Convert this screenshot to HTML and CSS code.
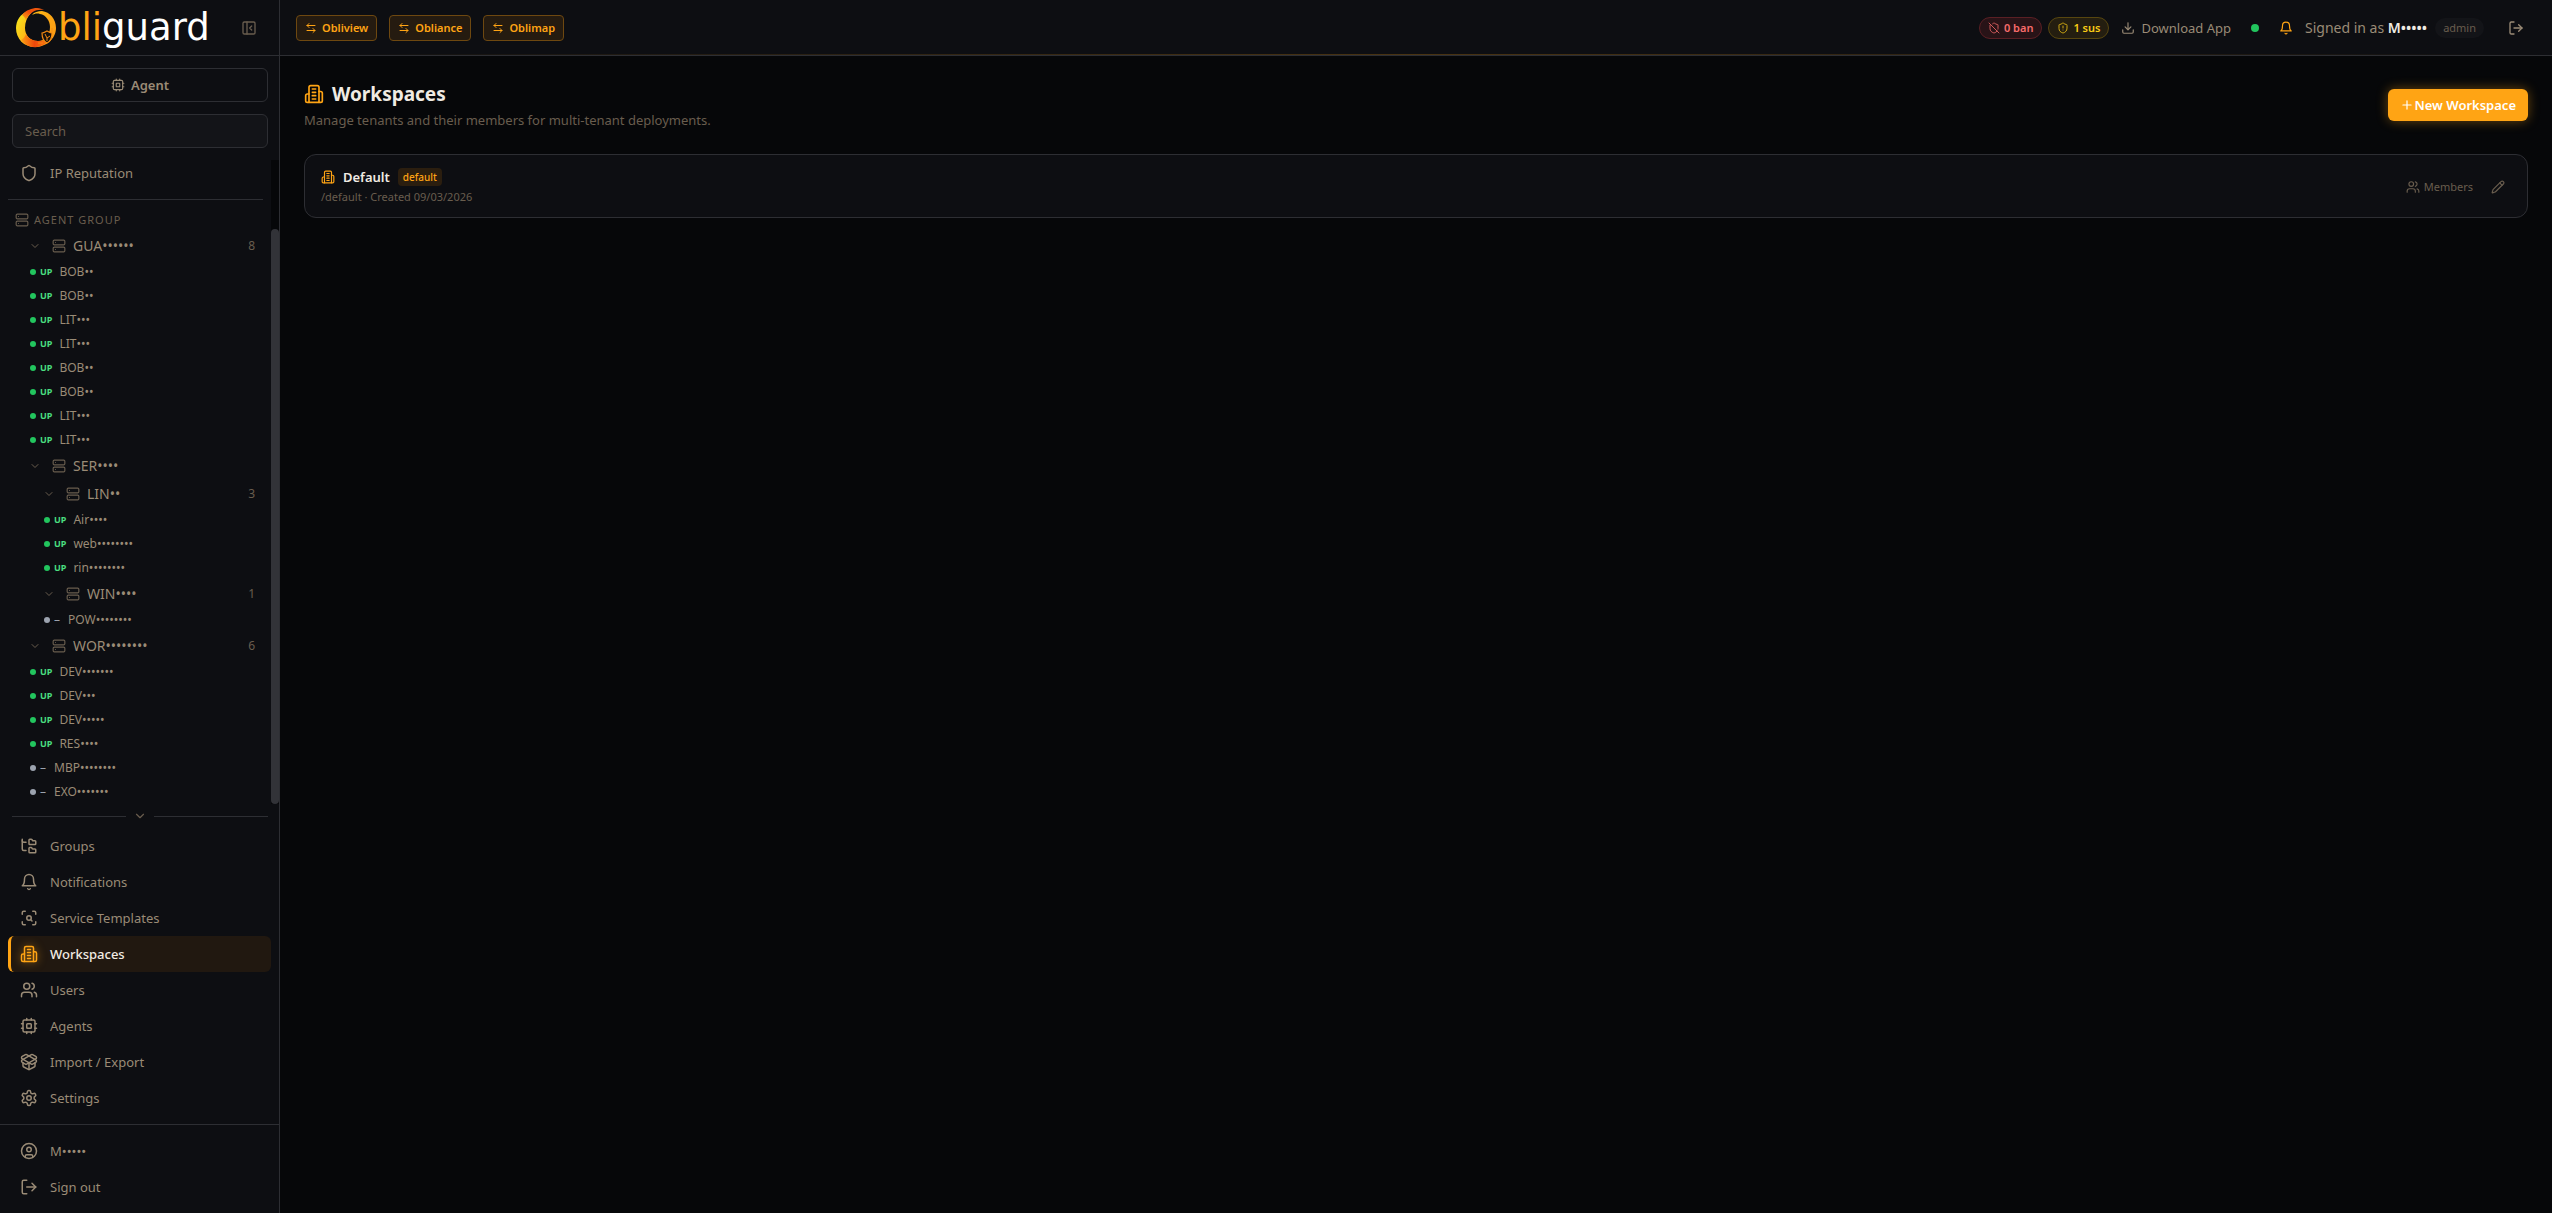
FILE: index.html
```html
<!DOCTYPE html>
<html lang="en">
<head>
    <meta charset="UTF-8">
    <meta name="viewport" content="width=device-width, initial-scale=1.0">
    <title>Obliguard - Workspaces</title>
    <link rel="stylesheet" href="styles.css">
</head>
<body>
    <!-- Icon set -->
    <svg class="sprite" aria-hidden="true">
        <symbol id="i-building" viewBox="0 0 24 24"><path d="M6 22V4a2 2 0 0 1 2-2h8a2 2 0 0 1 2 2v18Z"/><path d="M6 12H4a2 2 0 0 0-2 2v6a2 2 0 0 0 2 2h2"/><path d="M18 9h2a2 2 0 0 1 2 2v9a2 2 0 0 1-2 2h-2"/><path d="M10 6h4M10 10h4M10 14h4M10 18h4"/></symbol>
        <symbol id="i-tree" viewBox="0 0 24 24"><path d="M20 10a1 1 0 0 0 1-1V6a1 1 0 0 0-1-1h-2.5a1 1 0 0 1-.8-.4l-.9-1.2A1 1 0 0 0 15 3h-2a1 1 0 0 0-1 1v5a1 1 0 0 0 1 1Z"/><path d="M20 21a1 1 0 0 0 1-1v-3a1 1 0 0 0-1-1h-2.9a1 1 0 0 1-.88-.55l-.42-.85a1 1 0 0 0-.92-.6H13a1 1 0 0 0-1 1v5a1 1 0 0 0 1 1Z"/><path d="M3 5a2 2 0 0 0 2 2h3"/><path d="M3 3v13a2 2 0 0 0 2 2h3"/></symbol>
        <symbol id="i-bell" viewBox="0 0 24 24"><path d="M6 8a6 6 0 0 1 12 0c0 7 3 9 3 9H3s3-2 3-9"/><path d="M10.3 21a1.94 1.94 0 0 0 3.4 0"/></symbol>
        <symbol id="i-scan" viewBox="0 0 24 24"><path d="M3 7V5a2 2 0 0 1 2-2h2"/><path d="M17 3h2a2 2 0 0 1 2 2v2"/><path d="M21 17v2a2 2 0 0 1-2 2h-2"/><path d="M7 21H5a2 2 0 0 1-2-2v-2"/><circle cx="12" cy="12" r="3"/><path d="m16 16-1.9-1.9"/></symbol>
        <symbol id="i-users" viewBox="0 0 24 24"><path d="M16 21v-2a4 4 0 0 0-4-4H6a4 4 0 0 0-4 4v2"/><circle cx="9" cy="7" r="4"/><path d="M22 21v-2a4 4 0 0 0-3-3.87"/><path d="M16 3.13a4 4 0 0 1 0 7.75"/></symbol>
        <symbol id="i-cpu" viewBox="0 0 24 24"><rect x="4" y="4" width="16" height="16" rx="2"/><rect x="9" y="9" width="6" height="6" rx="1"/><path d="M15 2v2M15 20v2M2 15h2M2 9h2M20 15h2M20 9h2M9 2v2M9 20v2"/></symbol>
        <symbol id="i-package" viewBox="0 0 24 24"><path d="M12 22v-9"/><path d="M15.17 2.21a1.67 1.67 0 0 1 1.63 0L21 4.57a1.93 1.93 0 0 1 0 3.36L8.82 14.79a1.655 1.655 0 0 1-1.64 0L3 12.43a1.93 1.93 0 0 1 0-3.36z"/><path d="M20 13v3.87a2.06 2.06 0 0 1-1.11 1.83l-6 3.08a1.93 1.93 0 0 1-1.78 0l-6-3.08A2.06 2.06 0 0 1 4 16.87V13"/><path d="M21 12.43a1.93 1.93 0 0 0 0-3.36L8.83 2.2a1.64 1.64 0 0 0-1.63 0L3 4.57a1.93 1.93 0 0 0 0 3.36l12.18 6.86a1.636 1.636 0 0 0 1.63 0z"/></symbol>
        <symbol id="i-settings" viewBox="0 0 24 24"><path d="M12.22 2h-.44a2 2 0 0 0-2 2v.18a2 2 0 0 1-1 1.73l-.43.25a2 2 0 0 1-2 0l-.15-.08a2 2 0 0 0-2.73.73l-.22.38a2 2 0 0 0 .73 2.73l.15.1a2 2 0 0 1 1 1.72v.51a2 2 0 0 1-1 1.74l-.15.09a2 2 0 0 0-.73 2.73l.22.38a2 2 0 0 0 2.73.73l.15-.08a2 2 0 0 1 2 0l.43.25a2 2 0 0 1 1 1.73V20a2 2 0 0 0 2 2h.44a2 2 0 0 0 2-2v-.18a2 2 0 0 1 1-1.73l.43-.25a2 2 0 0 1 2 0l.15.08a2 2 0 0 0 2.73-.73l.22-.39a2 2 0 0 0-.73-2.73l-.15-.08a2 2 0 0 1-1-1.74v-.5a2 2 0 0 1 1-1.74l.15-.09a2 2 0 0 0 .73-2.73l-.22-.38a2 2 0 0 0-2.73-.73l-.15.08a2 2 0 0 1-2 0l-.43-.25a2 2 0 0 1-1-1.73V4a2 2 0 0 0-2-2z"/><circle cx="12" cy="12" r="3"/></symbol>
        <symbol id="i-user" viewBox="0 0 24 24"><circle cx="12" cy="12" r="10"/><circle cx="12" cy="10" r="3"/><path d="M7 20.662V19a2 2 0 0 1 2-2h6a2 2 0 0 1 2 2v1.662"/></symbol>
        <symbol id="i-logout" viewBox="0 0 24 24"><path d="M9 21H5a2 2 0 0 1-2-2V5a2 2 0 0 1 2-2h4"/><path d="m16 17 5-5-5-5"/><path d="M21 12H9"/></symbol>
        <symbol id="i-shield" viewBox="0 0 24 24"><path d="M20 13c0 5-3.5 7.5-7.66 8.95a1 1 0 0 1-.67-.01C7.5 20.5 4 18 4 13V6a1 1 0 0 1 1-1c2 0 4.5-1.2 6.24-2.72a1.17 1.17 0 0 1 1.52 0C14.51 3.81 17 5 19 5a1 1 0 0 1 1 1z"/></symbol>
        <symbol id="i-shield-alert" viewBox="0 0 24 24"><path d="M20 13c0 5-3.5 7.5-7.66 8.95a1 1 0 0 1-.67-.01C7.5 20.5 4 18 4 13V6a1 1 0 0 1 1-1c2 0 4.5-1.2 6.24-2.72a1.17 1.17 0 0 1 1.52 0C14.51 3.81 17 5 19 5a1 1 0 0 1 1 1z"/><path d="M12 8v4"/><path d="M12 16h.01"/></symbol>
        <symbol id="i-shield-off" viewBox="0 0 24 24"><path d="m2 2 20 20"/><path d="M5 5a1 1 0 0 0-1 1v7c0 5 3.5 7.5 7.67 8.94a1 1 0 0 0 .67.01c2.35-.82 4.48-1.97 5.9-3.71"/><path d="M9.309 3.652A12.252 12.252 0 0 0 11.24 2.28a1.17 1.17 0 0 1 1.52 0C14.51 3.81 17 5 19 5a1 1 0 0 1 1 1v7a9.784 9.784 0 0 1-.08 1.264"/></symbol>
        <symbol id="i-server" viewBox="0 0 24 24"><rect x="2" y="2" width="20" height="8" rx="2"/><rect x="2" y="14" width="20" height="8" rx="2"/><path d="M6 6h.01M6 18h.01"/></symbol>
        <symbol id="i-swap" viewBox="0 0 24 24"><path d="M8 3 4 7l4 4"/><path d="M4 7h16"/><path d="m16 21 4-4-4-4"/><path d="M20 17H4"/></symbol>
        <symbol id="i-download" viewBox="0 0 24 24"><path d="M21 15v4a2 2 0 0 1-2 2H5a2 2 0 0 1-2-2v-4"/><path d="m7 10 5 5 5-5"/><path d="M12 15V3"/></symbol>
        <symbol id="i-pencil" viewBox="0 0 24 24"><path d="M21.174 6.812a1 1 0 0 0-3.986-3.987L3.842 16.174a2 2 0 0 0-.5.83l-1.321 4.352a.5.5 0 0 0 .623.622l4.353-1.32a2 2 0 0 0 .83-.497z"/><path d="m15 5 4 4"/></symbol>
        <symbol id="i-panel" viewBox="0 0 24 24"><rect x="3" y="3" width="18" height="18" rx="2"/><path d="M9 3v18"/><path d="m16 15-3-3 3-3"/></symbol>
        <symbol id="i-chevron" viewBox="0 0 24 24"><path d="m6 9 6 6 6-6"/></symbol>
        <symbol id="i-plus" viewBox="0 0 24 24"><path d="M5 12h14M12 5v14"/></symbol>
    </svg>

    <div class="app">
        <aside class="sidebar">
            <div class="brand">
                <a href="#" class="logo" aria-label="Obliguard">
                    <svg class="logo-mark" viewBox="0 0 40 40">
                        <defs>
                            <linearGradient id="ring" x1="0" y1="0.3" x2="1" y2="0.7">
                                <stop offset="0" stop-color="#f7e11c"/>
                                <stop offset="0.35" stop-color="#fdb515"/>
                                <stop offset="1" stop-color="#fb9a14"/>
                            </linearGradient>
                            <linearGradient id="flameTop" x1="0" y1="1" x2="1" y2="0">
                                <stop offset="0" stop-color="#fbb016"/>
                                <stop offset="0.5" stop-color="#f2500c"/>
                                <stop offset="1" stop-color="#e8590c"/>
                            </linearGradient>
                            <linearGradient id="flameBottom" x1="0" y1="0" x2="1" y2="0">
                                <stop offset="0" stop-color="#fba016"/>
                                <stop offset="0.5" stop-color="#f0480a"/>
                                <stop offset="1" stop-color="#fb7a12"/>
                            </linearGradient>
                        </defs>
                        <path fill="url(#ring)" d="M12 3C4 6 0 13 0 20c0 11 8 19 19 19s21-8 21-19C40 11 34 4 26 3c-4 0-8 1-10 4 2-1 5-2 8-1 6 1 10 7 10 13 0 8-5 14-12 14-8 0-13-6-13-13 0-6 2-11 6-15Z"/>
                        <path fill="url(#flameTop)" d="M6 7C10 2 16 0 21 0c3 0 5 1 7 2-8-1-14 2-18 10-1-2-2-4-4-5Z"/>
                        <path fill="url(#flameBottom)" d="M5 32c4 5 10 8 16 7 5-1 9-3 11-6-4-1-6 0-10 0-6 0-10-3-12-7-1 3-3 5-5 6Z"/>
                        <path fill="#14100c" stroke="#f58a12" stroke-width="1.200" d="M31 23c2 1 3 2 5 2 0 5-1 8-5 10-4-2-5-5-5-10 2 0 3-1 5-2Z"/>
                        <path fill="none" stroke="#f58a12" d="M29 26l2 4 3-2M31 30v3M22 35h5M36 20v4"/>
                    </svg>
                    <span class="logo-text"><span class="logo-accent">bli</span>guard</span>
                </a>
                <button class="icon-btn" aria-label="Collapse sidebar"><svg class="icon s16"><use href="#i-panel"/></svg></button>
            </div>

            <div class="tools">
                <button class="agent-btn"><svg class="icon s14"><use href="#i-cpu"/></svg>Agent</button>
                <input class="search" type="text" placeholder="Search" aria-label="Search">
            </div>

            <div class="scroll">
                <div class="scroll-body">
                    <a href="#" class="nav-item nav-top"><svg class="icon s18"><use href="#i-shield"/></svg>IP Reputation</a>
                    <div class="tree">
                        <div class="tree-title"><svg class="icon s14"><use href="#i-server"/></svg>Agent group</div>

                        <button class="group"><svg class="icon s12"><use href="#i-chevron"/></svg><svg class="icon s14"><use href="#i-server"/></svg>GUA••••••<span class="count">8</span></button>
                        <a href="#" class="agent"><span class="dot up"></span><span class="state">UP</span>BOB••</a>
                        <a href="#" class="agent"><span class="dot up"></span><span class="state">UP</span>BOB••</a>
                        <a href="#" class="agent"><span class="dot up"></span><span class="state">UP</span>LIT•••</a>
                        <a href="#" class="agent"><span class="dot up"></span><span class="state">UP</span>LIT•••</a>
                        <a href="#" class="agent"><span class="dot up"></span><span class="state">UP</span>BOB••</a>
                        <a href="#" class="agent"><span class="dot up"></span><span class="state">UP</span>BOB••</a>
                        <a href="#" class="agent"><span class="dot up"></span><span class="state">UP</span>LIT•••</a>
                        <a href="#" class="agent"><span class="dot up"></span><span class="state">UP</span>LIT•••</a>

                        <button class="group"><svg class="icon s12"><use href="#i-chevron"/></svg><svg class="icon s14"><use href="#i-server"/></svg>SER••••</button>
                        <div class="nested">
                            <button class="group"><svg class="icon s12"><use href="#i-chevron"/></svg><svg class="icon s14"><use href="#i-server"/></svg>LIN••<span class="count">3</span></button>
                            <a href="#" class="agent"><span class="dot up"></span><span class="state">UP</span>Air••••</a>
                            <a href="#" class="agent"><span class="dot up"></span><span class="state">UP</span>web••••••••</a>
                            <a href="#" class="agent"><span class="dot up"></span><span class="state">UP</span>rin••••••••</a>
                            <button class="group"><svg class="icon s12"><use href="#i-chevron"/></svg><svg class="icon s14"><use href="#i-server"/></svg>WIN••••<span class="count">1</span></button>
                            <a href="#" class="agent"><span class="dot"></span><span class="state none">–</span>POW••••••••</a>
                        </div>

                        <button class="group"><svg class="icon s12"><use href="#i-chevron"/></svg><svg class="icon s14"><use href="#i-server"/></svg>WOR••••••••<span class="count">6</span></button>
                        <a href="#" class="agent"><span class="dot up"></span><span class="state">UP</span>DEV•••••••</a>
                        <a href="#" class="agent"><span class="dot up"></span><span class="state">UP</span>DEV•••</a>
                        <a href="#" class="agent"><span class="dot up"></span><span class="state">UP</span>DEV•••••</a>
                        <a href="#" class="agent"><span class="dot up"></span><span class="state">UP</span>RES••••</a>
                        <a href="#" class="agent"><span class="dot"></span><span class="state none">–</span>MBP••••••••</a>
                        <a href="#" class="agent"><span class="dot"></span><span class="state none">–</span>EXO•••••••</a>
                    </div>
                </div>
                <div class="scroll-track"><div class="scroll-thumb"></div></div>
            </div>

            <button class="fold" aria-label="Fold menu"><svg class="icon s14"><use href="#i-chevron"/></svg></button>

            <nav class="menu">
                <a href="#" class="nav-item"><svg class="icon s18"><use href="#i-tree"/></svg>Groups</a>
                <a href="#" class="nav-item"><svg class="icon s18"><use href="#i-bell"/></svg>Notifications</a>
                <a href="#" class="nav-item"><svg class="icon s18"><use href="#i-scan"/></svg>Service Templates</a>
                <a href="#" class="nav-item active"><svg class="icon s18"><use href="#i-building"/></svg>Workspaces</a>
                <a href="#" class="nav-item"><svg class="icon s18"><use href="#i-users"/></svg>Users</a>
                <a href="#" class="nav-item"><svg class="icon s18"><use href="#i-cpu"/></svg>Agents</a>
                <a href="#" class="nav-item"><svg class="icon s18"><use href="#i-package"/></svg>Import / Export</a>
                <a href="#" class="nav-item"><svg class="icon s18"><use href="#i-settings"/></svg>Settings</a>
            </nav>

            <div class="account">
                <a href="#" class="nav-item"><svg class="icon s18"><use href="#i-user"/></svg>M•••••</a>
                <a href="#" class="nav-item"><svg class="icon s18"><use href="#i-logout"/></svg>Sign out</a>
            </div>
        </aside>

        <div class="page">
            <header class="topbar">
                <div class="switches">
                    <a href="#" class="switch"><svg class="icon s12"><use href="#i-swap"/></svg>Obliview</a>
                    <a href="#" class="switch"><svg class="icon s12"><use href="#i-swap"/></svg>Obliance</a>
                    <a href="#" class="switch"><svg class="icon s12"><use href="#i-swap"/></svg>Oblimap</a>
                </div>
                <div class="status">
                    <div class="pills">
                        <a href="#" class="pill ban"><svg class="icon s12"><use href="#i-shield-off"/></svg>0 ban</a>
                        <a href="#" class="pill sus"><svg class="icon s12"><use href="#i-shield-alert"/></svg>1 sus</a>
                    </div>
                    <a href="#" class="download"><svg class="icon s14"><use href="#i-download"/></svg>Download App</a>
                    <span class="online"></span>
                    <button class="icon-btn bell" aria-label="Notifications"><svg class="icon s14"><use href="#i-bell"/></svg></button>
                    <div class="signed"><span>Signed in as <b>M•••••</b></span><span class="role">admin</span></div>
                    <button class="icon-btn leave" aria-label="Sign out"><svg class="icon s16"><use href="#i-logout"/></svg></button>
                </div>
            </header>

            <main class="content">
                <div class="page-head">
                    <div>
                        <h1><svg class="icon s20"><use href="#i-building"/></svg>Workspaces</h1>
                        <p>Manage tenants and their members for multi-tenant deployments.</p>
                    </div>
                    <button class="new-btn"><svg class="icon s14"><use href="#i-plus"/></svg>New Workspace</button>
                </div>

                <section class="card">
                    <div>
                        <h2><svg class="icon s14"><use href="#i-building"/></svg>Default<span class="badge">default</span></h2>
                        <p>/default · Created 09/03/2026</p>
                    </div>
                    <div class="card-actions">
                        <button class="members"><svg class="icon s14"><use href="#i-users"/></svg>Members</button>
                        <button class="icon-btn edit" aria-label="Edit workspace"><svg class="icon s14"><use href="#i-pencil"/></svg></button>
                    </div>
                </section>
            </main>
        </div>
    </div>
</body>
</html>
```

FILE: styles.css
```css
* {
    margin: 0;
    padding: 0;
    box-sizing: border-box;
}

:root {
    --bg: #060709;
    --panel: #0d0e12;
    --field: #131418;
    --border: #2d2e33;
    --text: #f0ebe3;
    --muted: #9a8b76;
    --dim: #695d4e;
    --accent: #ffa414;
    --green: #22c55e;
}

body {
    background-color: var(--bg);
    color: var(--muted);
    font-family: "Noto Sans", "Open Sans", sans-serif;
    font-size: 13px;
    line-height: 20px;
}

button,
input {
    font: inherit;
    color: inherit;
    background: none;
    border: none;
}

button {
    cursor: pointer;
}

a {
    color: inherit;
    text-decoration: none;
}

.sprite {
    display: none;
}

.icon {
    flex: none;
    fill: none;
    stroke: currentColor;
    stroke-width: 2;
    stroke-linecap: round;
    stroke-linejoin: round;
}

.s12 { width: 12px; height: 12px; }
.s14 { width: 14px; height: 14px; }
.s16 { width: 16px; height: 16px; }
.s18 { width: 18px; height: 18px; }
.s20 { width: 20px; height: 20px; }

.icon-btn {
    display: flex;
    color: var(--dim);
}

.app {
    display: flex;
    min-height: 100vh;
}

/* Sidebar */
.sidebar {
    display: flex;
    flex-direction: column;
    flex: none;
    width: 280px;
    background-color: var(--panel);
    border-right: 1px solid var(--border);
}

.brand {
    display: flex;
    align-items: center;
    justify-content: space-between;
    height: 56px;
    padding: 0 22px 0 16px;
    border-bottom: 1px solid var(--border);
}

.logo {
    display: flex;
    align-items: center;
    gap: 2px;
}

.logo-mark {
    width: 40px;
    height: 40px;
}

.logo-text {
    font-family: "DejaVu Sans", sans-serif;
    font-size: 37px;
    line-height: 40px;
    color: #fff;
}

.logo-accent {
    color: var(--accent);
}

.tools {
    display: flex;
    flex-direction: column;
    gap: 12px;
    padding: 12px 11px 12px 12px;
}

.agent-btn,
.search {
    width: 100%;
    height: 34px;
    border: 1px solid var(--border);
    border-radius: 6px;
}

.agent-btn {
    display: flex;
    align-items: center;
    justify-content: center;
    gap: 6px;
    font-weight: 600;
}

.search {
    padding: 0 12px;
    background-color: var(--field);
}

.search::placeholder {
    color: var(--dim);
}

.nav-item {
    display: flex;
    align-items: center;
    gap: 12px;
    height: 36px;
    padding: 0 12px;
    border-radius: 6px;
}

.nav-item.active {
    padding-left: 9px;
    border-left: 3px solid var(--accent);
    background-color: #211810;
    color: var(--text);
    font-weight: 500;
}

.nav-item.active .icon {
    color: var(--accent);
    filter: drop-shadow(0 0 4px rgba(255, 164, 20, 0.6));
}

/* Agent tree with its scrollbar */
.scroll {
    display: flex;
    flex: 1;
}

.scroll-body {
    flex: 1;
    padding-left: 8px;
}

.nav-top {
    height: 26px;
}

.tree {
    margin: 13px 8px 0 0;
    padding-top: 8px;
    border-top: 1px solid var(--border);
}

.tree-title {
    display: flex;
    align-items: center;
    gap: 5px;
    height: 24px;
    padding-left: 7px;
    color: var(--dim);
    font-size: 11px;
    text-transform: uppercase;
    letter-spacing: 1px;
}

.group {
    display: flex;
    align-items: center;
    width: 100%;
    height: 28px;
    padding: 0 8px 0 21px;
    gap: 7px;
    font-size: 14px;
}

.group .icon {
    color: var(--dim);
}

.group .s12 {
    margin-right: 4px;
}

.count {
    margin-left: auto;
    color: var(--dim);
    font-size: 12px;
}

.nested {
    padding-left: 14px;
}

.agent {
    display: flex;
    align-items: center;
    height: 24px;
    padding-left: 22px;
    font-size: 12px;
}

.dot {
    width: 6px;
    height: 6px;
    border-radius: 50%;
    background-color: #9ca3af;
}

.dot.up {
    background-color: var(--green);
}

.state {
    margin: 0 7px 0 4px;
    color: #4ade80;
    font-size: 9px;
    font-weight: 700;
}

.state.none {
    margin-right: 8px;
    color: #9ca3af;
    font-size: 12px;
    font-weight: 400;
}

.scroll-track {
    width: 8px;
    padding-top: 69px;
    background-color: var(--bg);
    display: flex;
}

.scroll-thumb {
    flex: 1;
    border-radius: 4px;
    background-color: #323338;
}

.fold {
    display: flex;
    align-items: center;
    gap: 7px;
    height: 24px;
    padding: 0 11px 0 12px;
    color: var(--dim);
}

.fold::before,
.fold::after {
    content: "";
    flex: 1;
    height: 1px;
    background-color: var(--border);
}

.menu {
    padding: 0 8px 8px;
}

.account {
    padding: 8px;
    border-top: 1px solid var(--border);
}

/* Top bar */
.page {
    display: flex;
    flex-direction: column;
    flex: 1;
}

.topbar {
    display: flex;
    align-items: center;
    justify-content: space-between;
    height: 56px;
    padding: 0 16px;
    background: linear-gradient(90deg, transparent, rgba(255, 164, 20, 0.25), transparent) bottom / 100% 1px no-repeat var(--panel);
    border-bottom: 1px solid var(--border);
}

.switches {
    display: flex;
    gap: 12px;
}

.switch {
    display: flex;
    align-items: center;
    gap: 5px;
    height: 26px;
    padding: 0 8px;
    border: 1px solid #6e4810;
    border-radius: 4px;
    background-color: #251b10;
    color: var(--accent);
    font-size: 11px;
    font-weight: 600;
}

.status {
    display: flex;
    align-items: center;
}

.pills {
    display: flex;
    gap: 6px;
    margin-right: 12px;
}

.pill {
    display: flex;
    align-items: center;
    gap: 4px;
    height: 22px;
    padding: 0 8px;
    border: 1px solid;
    border-radius: 11px;
    font-size: 11px;
    font-weight: 600;
}

.pill.ban {
    color: #f86b6b;
    background-color: #281317;
    border-color: #5a1f24;
}

.pill.sus {
    color: #facc15;
    background-color: #241e10;
    border-color: #57460f;
}

.pill .icon {
    opacity: 0.8;
}

.download {
    display: flex;
    align-items: center;
    gap: 6px;
}

.online {
    width: 8px;
    height: 8px;
    margin: 0 20px;
    border-radius: 50%;
    background-color: var(--green);
}

.bell {
    color: var(--accent);
}

.signed {
    display: flex;
    align-items: center;
    gap: 8px;
    margin-left: 12px;
    font-size: 14px;
}

.signed b {
    color: var(--text);
    font-weight: 600;
}

.role {
    padding: 0 8px;
    border-radius: 10px;
    background-color: var(--field);
    color: var(--dim);
    font-size: 11px;
}

.leave {
    margin: 0 12px 0 24px;
    color: var(--muted);
}

/* Page content */
.content {
    padding: 24px;
}

.page-head {
    display: flex;
    align-items: center;
    justify-content: space-between;
    margin-bottom: 24px;
}

.page-head h1 {
    display: flex;
    align-items: center;
    gap: 8px;
    color: var(--text);
    font-size: 19px;
    font-weight: 700;
    line-height: 28px;
}

.page-head h1 .icon,
.card h2 .icon {
    color: var(--accent);
}

.page-head p {
    margin-top: 2px;
    color: var(--dim);
}

.new-btn {
    display: flex;
    align-items: center;
    height: 32px;
    padding: 0 12px;
    border-radius: 6px;
    background-color: var(--accent);
    box-shadow: 0 0 12px rgba(255, 164, 20, 0.4);
    color: #fff;
    font-weight: 600;
}

.card {
    display: flex;
    align-items: center;
    justify-content: space-between;
    height: 64px;
    padding: 2px 16px 0;
    border: 1px solid var(--border);
    border-radius: 12px;
    background-color: var(--panel);
}

.card h2 {
    display: flex;
    align-items: center;
    gap: 8px;
    color: var(--text);
    font-size: 13px;
    font-weight: 600;
}

.badge {
    padding: 0 5px;
    border-radius: 4px;
    background-color: #2b1e0f;
    color: var(--accent);
    font-size: 10px;
    font-weight: 500;
    line-height: 18px;
}

.card p {
    color: var(--dim);
    font-size: 11px;
}

.card-actions {
    display: flex;
    align-items: center;
    gap: 18px;
    padding-right: 6px;
    color: var(--dim);
}

.members {
    display: flex;
    align-items: center;
    gap: 4px;
    font-size: 11px;
}
```
